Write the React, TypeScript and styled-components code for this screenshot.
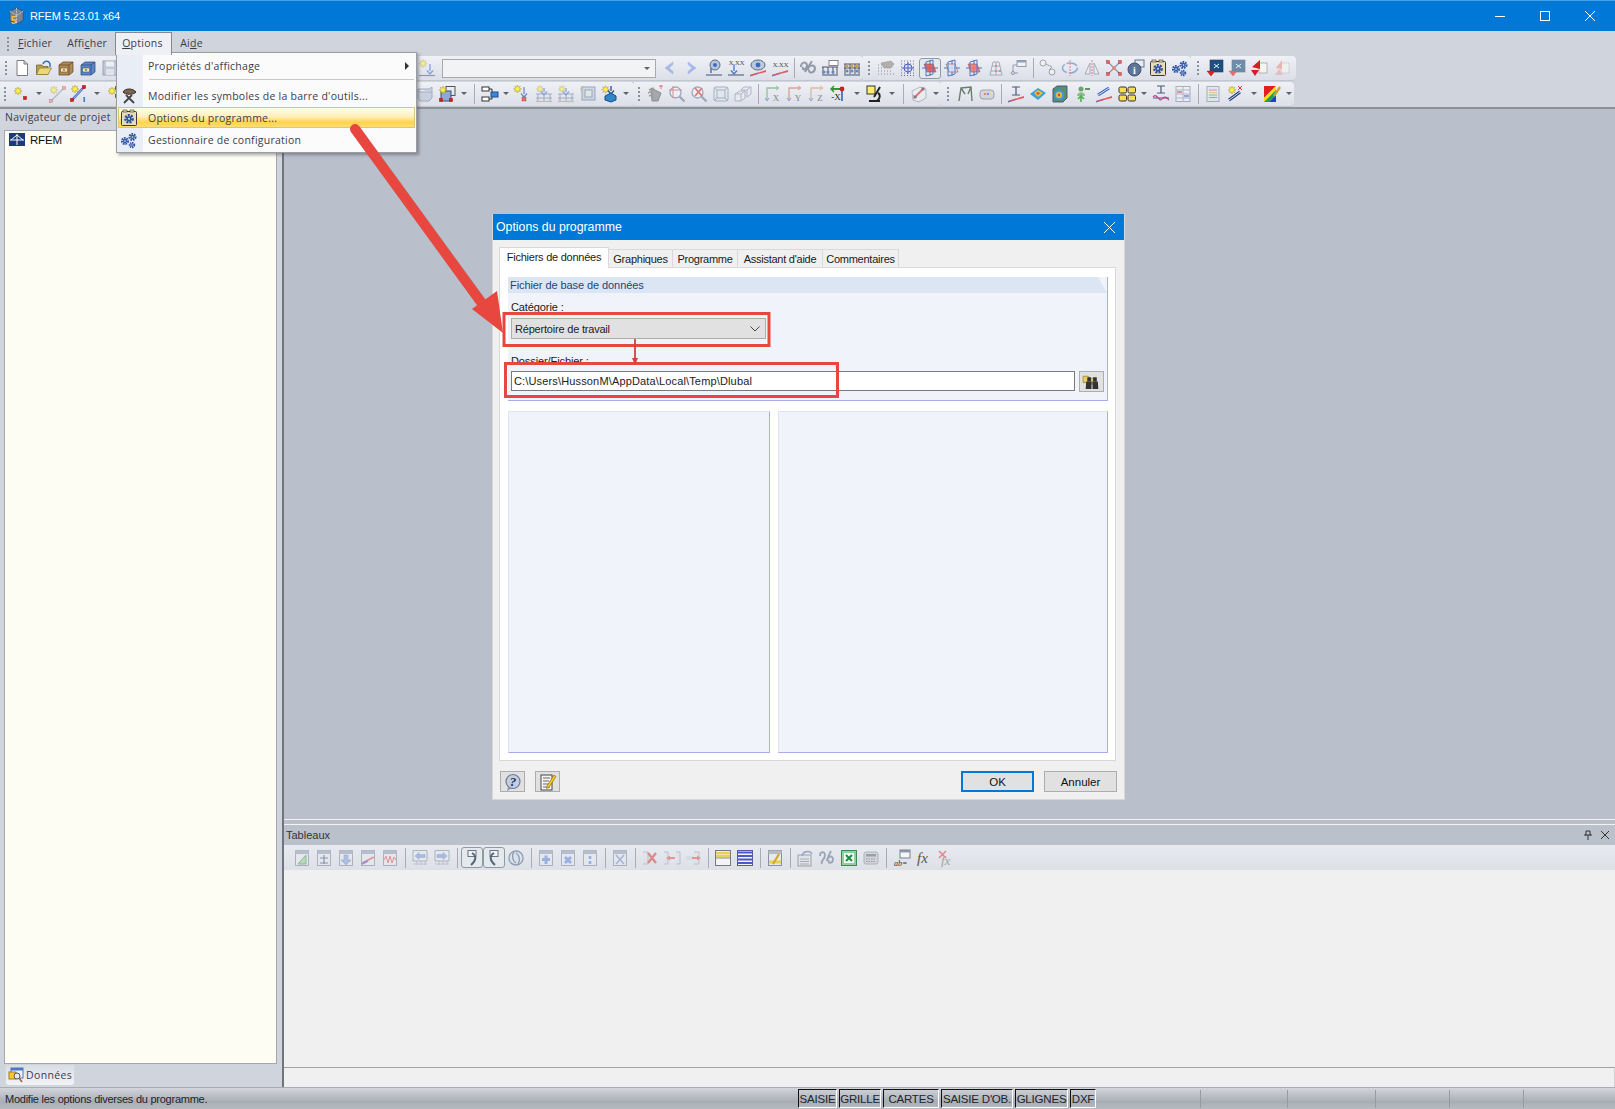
import React, { ReactNode } from "react";
import styled, { createGlobalStyle } from "styled-components";

const GlobalStyle = createGlobalStyle`
  html, body {
    margin: 0;
    padding: 0;
    overflow: hidden;
    background: #d0d4dc;
  }
  * {
    box-sizing: border-box;
  }
`;

// small drawing helpers for the toolbar glyphs
const star = (x: number, y: number, r = 4) => {
  const pts: string[] = [];
  for (let i = 0; i < 16; i++) {
    const a = (Math.PI * i) / 8;
    const d = i % 2 ? r * 0.5 : r;
    pts.push(`${(x + Math.cos(a) * d).toFixed(1)},${(y + Math.sin(a) * d).toFixed(1)}`);
  }
  return <polygon points={pts.join(" ")} fill="#fff14a" stroke="#a8982a" strokeWidth=".5" />;
};
const dot = (x: number, y: number, c = "#e01b1b", s = 3.4) => (
  <rect x={x - s / 2} y={y - s / 2} width={s} height={s} fill={c} stroke="#7a1010" strokeWidth=".3" />
);
const base = (y = 16, c = "#5a6a8a") => <line x1="1" y1={y} x2="17" y2={y} stroke={c} strokeWidth="1.2" />;
const wedge = <path d="M1 16 L17 11 L17 13 L1 17Z" fill="#e85a5a" />;
const wedgeBlue = <path d="M1 16 L9 13.5 L9 15 L1 17.5Z" fill="#4a6ae0" />;
const down = (x: number, y1: number, y2: number, c = "#4a78c8") => (
  <path d={`M${x} ${y1} V${y2 - 3} M${x - 3} ${y2 - 3.5} L${x} ${y2} L${x + 3} ${y2 - 3.5}`} fill="none" stroke={c} strokeWidth="1.3" />
);
const tbl = (inner?: ReactNode, head = "#98a3b8") => (
  <>
    <rect x="2.5" y="1.5" width="13" height="15" fill="#e6e9ee" stroke="#8a919e" />
    <rect x="2.5" y="1.5" width="13" height="3.5" fill={head} />
    {inner}
  </>
);
const grid = (c = "#8d98ae") => (
  <path d="M2 7h14M2 11h14M2 15h14M6 5v11M10 5v11M14 5v11" stroke={c} strokeWidth=".8" fill="none" />
);
const gear = (x: number, y: number, r: number, c = "#2f57a8") => (
  <>
    <circle cx={x} cy={y} r={r} fill="none" stroke={c} strokeWidth={r * 0.7} strokeDasharray={`${r * 0.55} ${r * 0.3}`} />
    <circle cx={x} cy={y} r={r * 0.72} fill={c} />
    <circle cx={x} cy={y} r={r * 0.28} fill="#dfe8f6" />
  </>
);
const fileBox = (c: string, d: string) => (
  <>
    <path d="M2 6 L6 3 H16 V13 L12 16 H2Z" fill={c} stroke={d} strokeWidth=".7" />
    <path d="M2 6 H12 V16 M12 6 L16 3" fill="none" stroke={d} strokeWidth=".7" />
    <rect x="3.5" y="9" width="7" height="4" fill="#f2e2b0" stroke={d} strokeWidth=".5" />
    <rect x="6" y="10.5" width="2" height="1" fill={d} />
  </>
);
const plane = (c: string) => (
  <>
    <path d="M9 1 V17 M1 9 H17" stroke="#4a78c8" strokeWidth="1" />
    <path d="M3 5 H12 L15 13 H6Z" fill={c} stroke="#a33" strokeWidth=".6" opacity=".85" />
    <path d="M5 3 L12 1 V15 L5 17Z" fill="none" stroke="#4a78c8" strokeWidth="1" />
  </>
);
const scene = (c1: string, c2: string) => (
  <>
    <rect x="4" y="1" width="13" height="12" fill={c1} stroke="#24405f" strokeWidth=".6" />
    <path d="M8 5 L13 9 M13 5 L8 9" stroke="#dff" strokeWidth="1" />
    <path d="M1 12 H9 L5 17Z" fill={c2} stroke="#8a1515" strokeWidth=".4" />
  </>
);
const axis = (t: string, c: string) => (
  <>
    <path d="M3 15 V3 H14" fill="none" stroke={c} strokeWidth="1.3" />
    <path d="M12 1 L15 3 L12 5" fill="none" stroke={c} strokeWidth="1" />
    <path d="M1 13 L3 16 L5 13" fill="none" stroke="#4a78c8" strokeWidth="1" />
    <text x="12" y="16" fontSize="9" fontFamily="Liberation Serif, serif" textAnchor="middle" fill="#444">{t}</text>
  </>
);
const magnify = (inner: ReactNode) => (
  <>
    <circle cx="7.5" cy="7.5" r="5.5" fill="#eef3fa" stroke="#6f7f96" strokeWidth="1.3" />
    <path d="M11.5 11.5 L16.5 16.5" stroke="#6f7f96" strokeWidth="2.2" />
    {inner}
  </>
);

const glyphs: Record<string, ReactNode> = {
  new: <path d="M4 1.5 H11 L14.5 5 V16.5 H4Z M11 1.5 V5 H14.5" fill="#fff" stroke="#6d6d6d" strokeWidth=".9" />,
  open: (
    <>
      <path d="M1.5 15.5 V6 H7 L8 7.5 H13 V15.5Z" fill="#b8a04a" stroke="#6c5c1e" strokeWidth=".7" />
      <path d="M1.5 15.5 L4.5 9 H16.5 L13 15.5Z" fill="#ecd67a" stroke="#8c7a2a" strokeWidth=".7" />
      <path d="M8 5 C9 1.5 14 1 15 5 L15 8" fill="none" stroke="#3d6fb5" strokeWidth="1.5" />
    </>
  ),
  drawerTan: fileBox("#b18a55", "#5e4424"),
  drawerBlue: fileBox("#5f86c9", "#274680"),
  save: (
    <>
      <rect x="2" y="2" width="14" height="14" fill="#a8b3c8" stroke="#6b7690" />
      <rect x="5" y="2.5" width="8" height="5" fill="#eef1f6" />
      <rect x="5" y="10" width="8" height="6" fill="#dde2ea" />
    </>
  ),
  nodeDown: (
    <>
      {star(5, 4.5)}
      {down(12, 5, 15)}
      {base(16.5)}
    </>
  ),
  prev: <path d="M12 3 L4 9 L12 15 L12 12.5 L8 9 L12 5.5Z" fill="#7d9be0" stroke="#7d9be0" strokeWidth=".6" />,
  next: <path d="M5 3 L13 9 L5 15 L5 12.5 L9 9 L5 5.5Z" fill="#7d9be0" stroke="#7d9be0" strokeWidth=".6" />,
  pin: (
    <>
      <circle cx="10" cy="6" r="5" fill="#b9c6da" stroke="#5b6d8a" />
      <circle cx="10" cy="6" r="2" fill="#3a6fc0" />
      <path d="M6 9 V14" stroke="#3a6fc0" strokeWidth="1.4" />
      {base()}
    </>
  ),
  xxDown: (
    <>
      <text x="9.5" y="5.5" fontSize="6.5" fontFamily="Liberation Serif, serif" textAnchor="middle" fill="#444">X.XX</text>
      {down(7, 6, 15)}
      {base()}
    </>
  ),
  eye: (
    <>
      <ellipse cx="9" cy="6" rx="7" ry="5" fill="#bcc8dc" stroke="#5b6d8a" />
      <circle cx="9" cy="6" r="2.4" fill="#3a6fc0" />
      {wedgeBlue}
      {wedge}
    </>
  ),
  xxWedge: (
    <>
      <text x="9.5" y="8" fontSize="6.5" fontFamily="Liberation Serif, serif" textAnchor="middle" fill="#444">X.XX</text>
      {wedgeBlue}
      {wedge}
    </>
  ),
  spring: <path d="M2 8 C2 3 7 2 8 6 C8 11 3 12 4 8 M9 11 C9 6 15 5 16 9 C16 14 10 15 10 11 M13 2 L6 13" fill="none" stroke="#5a687e" strokeWidth="2" />,
  frameA: (
    <>
      <rect x="8" y="1.5" width="9" height="5" fill="#fff" stroke="#556" strokeWidth=".7" />
      <path d="M1 8 H17 M2 8 V15 M7 8 V15 M12 8 V15 M16 8 V15" stroke="#556" fill="none" />
      <circle cx="3" cy="13" r="1.6" fill="#6787c2" /><circle cx="7" cy="13" r="1.6" fill="#6787c2" /><circle cx="12" cy="13" r="1.6" fill="#6787c2" />
      {base(16)}
    </>
  ),
  frameB: (
    <>
      <path d="M1 5 H17 M2 5 V15 M7 5 V15 M12 5 V15 M16 5 V15 M1 9 H17" stroke="#556" fill="none" />
      <circle cx="4" cy="7" r="1.5" fill="#c9a23a" /><circle cx="9" cy="7" r="1.5" fill="#c9a23a" /><circle cx="14" cy="7" r="1.5" fill="#c9a23a" />
      <circle cx="4" cy="12" r="1.5" fill="#6787c2" /><circle cx="9" cy="12" r="1.5" fill="#6787c2" /><circle cx="14" cy="12" r="1.5" fill="#6787c2" />
      {base(16)}
    </>
  ),
  gridHand: (
    <>
      <path d="M1 6h1M4 6h1M1 9h1M4 9h1M1 12h1M4 12h1M7 12h1M10 12h1M13 12h1M1 15h1M4 15h1M7 15h1M10 15h1M13 15h1M16 15h1" stroke="#555" />
      <path d="M4 4 L14 2 L17 5 L14 9 L7 9Z" fill="#8f887e" stroke="#555" strokeWidth=".5" />
    </>
  ),
  gridStar: (
    <>
      <path d="M2 2h14M2 5h14M2 8h14M2 11h14M2 14h14M2 16.5h14" stroke="#6a7080" strokeDasharray="1 2" />
      <circle cx="9" cy="9" r="4" fill="#d8dff5" stroke="#5060c8" />
      <path d="M3 9 H15 M9 3 V15" stroke="#5060c8" />
    </>
  ),
  planeRedOn: plane("#e2564b"),
  planeBlue: plane("#d8e4f4"),
  planeRed: plane("#f07a70"),
  gridRed: (
    <>
      <path d="M3 16 L6 3 H12 L15 16Z M4 12 H14 M5 7 H13 M9 3 V16" fill="#e8edf4" stroke="#7a869a" />
      <circle cx="9" cy="7" r="1" fill="#e03030" /><circle cx="9" cy="12" r="1" fill="#e03030" /><circle cx="13" cy="12" r="1" fill="#e03030" />
    </>
  ),
  path: (
    <>
      <rect x="8" y="1.5" width="9" height="6" fill="#f5f7fb" stroke="#5b6d8a" />
      <rect x="8" y="1.5" width="9" height="2" fill="#5b6d8a" />
      <path d="M8 6 H4 V14 H9" fill="none" stroke="#5b6d8a" />
      <circle cx="4" cy="14" r="1.6" fill="#c9d3e2" stroke="#5b6d8a" />
    </>
  ),
  chain: (
    <>
      <circle cx="4" cy="4" r="3" fill="#f3f4f6" stroke="#777" />
      <circle cx="13" cy="13" r="3" fill="#f3f4f6" stroke="#777" />
      <path d="M7 5 L13 8 L10 11" fill="none" stroke="#777" />
    </>
  ),
  rotate: (
    <>
      <ellipse cx="9" cy="9" rx="7.5" ry="5" fill="none" stroke="#5b85c8" strokeWidth="1.6" strokeDasharray="11 2" />
      <path d="M9 1 V17" stroke="#e04040" strokeDasharray="2 1" />
    </>
  ),
  mirror: (
    <>
      <path d="M7 4 L2 15 H7Z M11 4 L16 15 H11Z" fill="#eef1f5" stroke="#7a8494" />
      <path d="M9 1 V17" stroke="#e04040" strokeDasharray="2 1" />
    </>
  ),
  cross: (
    <>
      <path d="M3 3 L15 15 M15 3 L3 15" stroke="#8595a8" strokeWidth="1.2" />
      <circle cx="9" cy="9" r="2" fill="#e88a84" />
      {dot(3, 3, "#e8605a", 3)}{dot(15, 3, "#e8605a", 3)}{dot(3, 15, "#e8605a", 3)}{dot(15, 15, "#e8605a", 3)}
    </>
  ),
  info: (
    <>
      <rect x="8" y="1" width="9" height="7" fill="#e7ebf2" stroke="#66758c" />
      <circle cx="7.5" cy="10.5" r="6.5" fill="#5f7598" stroke="#3e506e" />
      <text x="7.5" y="14.5" fontSize="10" fontFamily="Liberation Serif, serif" fontWeight="700" textAnchor="middle" fill="#fff">i</text>
    </>
  ),
  options: (
    <>
      <rect x="1.5" y="2.5" width="15" height="14" rx="1" fill="#eadcb4" stroke="#3a3a3a" />
      <rect x="3" y="1" width="4" height="2" fill="#eadcb4" stroke="#3a3a3a" strokeWidth=".6" />
      <rect x="10" y="1" width="4" height="2" fill="#eadcb4" stroke="#3a3a3a" strokeWidth=".6" />
      {gear(9, 9.8, 3.6, "#2d4fa0")}
    </>
  ),
  gears: (
    <>
      {gear(5, 10, 3)}
      {gear(12.5, 6, 3)}
      {gear(12, 14, 2.4)}
    </>
  ),
  sceneA: scene("#1f4f80", "#e81f1f"),
  sceneB: scene("#7ea4ca", "#f08a8a"),
  coneA: (
    <>
      <rect x="9" y="4" width="8" height="10" fill="#f5f5f0" stroke="#8a8a8a" strokeWidth=".6" />
      <path d="M10 1 V10 L2 8Z" fill="#d91c1c" />
      <path d="M1 11 H9 L5 17Z" fill="#d91c1c" />
    </>
  ),
  coneB: (
    <>
      <rect x="9" y="4" width="8" height="10" fill="#f5f5f0" stroke="#aaa" strokeWidth=".6" />
      <path d="M10 1 V10 L4 9Z" fill="#ee8f8a" />
      <path d="M3 16 L7 10 L11 16Z" fill="#f0a0a0" />
    </>
  ),
  point: (
    <>
      {star(6, 6)}
      {dot(13, 13)}
    </>
  ),
  lineStar: (
    <>
      {star(6, 5)}
      <path d="M3 16 L16 3" stroke="#8a9ab8" strokeWidth="1.2" />
      {dot(3, 16, "#ee8f8a")}
      {dot(16, 3, "#ee8f8a")}
    </>
  ),
  lineI: (
    <>
      {star(5, 4)}
      <path d="M2 15 L14 2" stroke="#3d63c0" strokeWidth="2.4" />
      <path d="M2 15 L14 2" stroke="#cfe0ff" strokeWidth=".8" />
      {dot(2, 15)}{dot(14, 2)}
      <text x="14" y="17" fontSize="8" fontFamily="Liberation Sans, sans-serif" fontWeight="700" textAnchor="middle" fill="#40507a">I</text>
    </>
  ),
  starRed: (
    <>
      {star(6, 6)}
      {dot(11, 3)}
      {dot(11, 11)}
    </>
  ),
  cubeFlat: <path d="M2 4 H13 L16 2 V13 L13 16 H4 L2 13Z M2 4 L4 7 H16" fill="#b7c3d6" stroke="#78869c" />,
  starBox: (
    <>
      <rect x="8" y="1.5" width="9" height="9" fill="none" stroke="#555" />
      <rect x="3" y="6" width="10" height="10" fill="#8faad2" stroke="#34507e" />
      {star(5, 5)}
      {dot(3, 15)}{dot(13, 15)}
    </>
  ),
  flow: (
    <>
      <rect x="1" y="2" width="7" height="4" fill="#fff" stroke="#333" />
      <rect x="1" y="12" width="7" height="4" fill="#fff" stroke="#333" />
      <path d="M8 4 H11 V7 M8 14 H11 V11" fill="none" stroke="#333" />
      <rect x="10" y="7" width="7" height="5" fill="#3f86d8" stroke="#1d4f8e" />
    </>
  ),
  starDown: (
    <>
      {star(4.5, 4)}
      {down(11, 2, 12, "#6f8fc8")}
      {dot(11, 14, "#ee6f6a", 4)}
    </>
  ),
  frameStar: (
    <>
      {star(5, 4, 3.5)}
      <path d="M1 9 H17 M3 9 V16 M9 9 V16 M15 9 V16 M1 13 H17" stroke="#7585a8" fill="none" />
      {down(9, 3, 10, "#4f78c8")}
      {base(16.5, "#e88")}
    </>
  ),
  frameBox: (
    <>
      {star(4, 4, 3)}
      <rect x="3" y="2" width="13" height="13" fill="#bccadb" stroke="#6d7d95" />
      <rect x="6" y="5" width="7" height="7" fill="#d9e8d6" stroke="#6d7d95" />
    </>
  ),
  starBlue: (
    <>
      {star(4.5, 4.5)}
      {down(10, 1, 9, "#244f96")}
      <path d="M4 11 L10 8 L15 11 V15 L10 17 L4 15Z" fill="#2f87c8" stroke="#184f82" />
    </>
  ),
  hand: (
    <>
      <path d="M5 3 L15 8 L12 16 H6Z" fill="#7d7d7d" stroke="#555" />
      <path d="M3 5 L8 3 M2 8 L7 6 M3 11 L8 9" stroke="#6a6a6a" strokeWidth="1.5" />
      <path d="M13 1 H17 M15 0 V4" stroke="#d25" />
    </>
  ),
  zoomAdd: magnify(<path d="M5 1 V13 M1 5 H14" stroke="#d03030" strokeWidth=".8" />),
  zoomX: magnify(<path d="M5 3 L12 11 M12 3 L5 11" stroke="#d03030" strokeWidth="1.8" />),
  cube: (
    <>
      <rect x="2" y="2" width="14" height="14" rx="2" fill="#dfe6ef" stroke="#7a8aa0" />
      <rect x="5" y="5" width="8" height="8" fill="none" stroke="#7a8aa0" />
      <path d="M2 2 L5 5 M16 2 L13 5 M2 16 L5 13 M16 16 L13 13" stroke="#7a8aa0" />
    </>
  ),
  cubes: (
    <>
      <path d="M1 9 L6 6 H11 V13 L7 16 H1Z M1 9 H7 V16 M7 9 L11 6" fill="#e8edf3" stroke="#8795a8" />
      <path d="M7 5 L10 2 H17 V9 L13 12 V5 H7 M13 5 L17 2" fill="#e8edf3" stroke="#8795a8" />
    </>
  ),
  axisX: axis("X", "#5fa85f"),
  axisY: axis("Y", "#d86a5a"),
  axisZ: axis("Z", "#d89a6a"),
  axisNeg: (
    <>
      <path d="M1 4 H11" stroke="#2d9a2d" strokeWidth="2" />
      <path d="M4 1 L1 4 L4 7" fill="none" stroke="#2d9a2d" strokeWidth="1.5" />
      <path d="M12 4 V16" stroke="#3060c0" strokeWidth="1.6" />
      <circle cx="12" cy="4" r="2.4" fill="#c81f1f" />
      <text x="6" y="15" fontSize="9" fontFamily="Liberation Serif, serif" textAnchor="middle" fill="#222">-X</text>
    </>
  ),
  micro: (
    <>
      <rect x="1" y="1" width="8" height="8" fill="#ffee66" stroke="#333" />
      <path d="M14 2 L8 12 M3 16 H14 M11 16 C15 13 14 9 12 8" fill="none" stroke="#222" strokeWidth="2" />
    </>
  ),
  cut: (
    <>
      <path d="M2 6 L10 2 L16 4 V13 L9 17 L3 15Z" fill="#eceef2" stroke="#9199a5" />
      <path d="M5 12 L13 4" stroke="#d81f1f" strokeWidth="1.8" />
      {dot(5, 12, "#333", 2.4)}{dot(13, 4, "#333", 2.4)}
    </>
  ),
  frameLines: <path d="M3 16 L5 3 L15 2 L16 16 M5 3 L9 9 M15 2 L12 9" fill="none" stroke="#6a7f6a" strokeWidth="1.4" />,
  tag: (
    <>
      <rect x="2" y="5" width="14" height="9" rx="3" fill="#c5c9d0" stroke="#777" />
      <rect x="6" y="8" width="2" height="2" fill="#d44" /><rect x="9" y="8" width="2" height="2" fill="#44d" /><rect x="12" y="8" width="2" height="2" fill="#dd4" />
    </>
  ),
  beamI: (
    <>
      <path d="M5 2 H13 M9 2 V10 M5 10 H13" stroke="#4a5a7a" strokeWidth="1.2" fill="none" />
      {wedgeBlue}
      {wedge}
    </>
  ),
  surface: (
    <>
      <path d="M1 9 L9 3 L17 8 L9 15Z" fill="#3aa0d8" />
      <path d="M5 8 L9 5 L14 8 L9 12Z" fill="#e8c53a" />
      <path d="M7 8 L9 7 L11 8 L9 10Z" fill="#e0443a" />
    </>
  ),
  colorCube: (
    <>
      <path d="M2 4 L6 1 H16 V13 L12 17 H2Z" fill="#5a8a78" stroke="#4a5a70" />
      <circle cx="8" cy="10" r="5" fill="#3aa0d8" />
      <circle cx="8" cy="10" r="3" fill="#e8c53a" />
      <circle cx="8" cy="10" r="1.4" fill="#e0443a" />
    </>
  ),
  people: (
    <>
      <circle cx="8" cy="4" r="2.5" fill="#6ea26e" />
      <path d="M4 11 C4 6 12 6 12 11Z" fill="#8cba8c" />
      <path d="M8 11 V17 M5 14 L8 11 L11 14" stroke="#4fb04f" strokeWidth="1.6" fill="none" />
      <path d="M17 4 H12" stroke="#5a9a5a" strokeWidth="2" />
    </>
  ),
  loadLine: (
    <>
      <path d="M3 10 L14 3" stroke="#3d63c0" strokeWidth="3" />
      <path d="M3 10 L14 3" stroke="#d6e4fa" strokeWidth="1" />
      {wedgeBlue}
      {wedge}
    </>
  ),
  four: (
    <>
      {[[1, 2], [10, 2], [1, 10], [10, 10]].map(([x, y], i) => (
        <rect key={i} x={x} y={y} width="7.5" height="6" rx="1.5" fill="#f6dc5a" stroke="#333" />
      ))}
    </>
  ),
  beamWave: (
    <>
      <path d="M5 1 H13 M9 1 V8 M5 8 H13" stroke="#4a5a7a" strokeWidth="1.2" fill="none" />
      <path d="M1 13 H17" stroke="#4a5a7a" />
      <path d="M1 12 C5 7 7 18 10 14 C13 10 15 13 17 15" fill="none" stroke="#c83a8a" strokeWidth="1.2" />
    </>
  ),
  tableMix: (
    <>
      <rect x="2" y="1.5" width="14" height="15" fill="#f0f2f6" stroke="#7a879c" />
      <path d="M2 5 H16 M2 9 H16 M2 13 H16 M9 1.5 V16.5" stroke="#8896ac" />
      <rect x="3" y="6" width="5" height="2" fill="#d65a5a" />
      <rect x="10" y="10" width="5" height="2" fill="#5a7ad6" />
    </>
  ),
  doc: (
    <>
      <rect x="3" y="1.5" width="12" height="15" fill="#dfe3ea" stroke="#7a879c" />
      <path d="M5 5h8" stroke="#d65a5a" /><path d="M5 7.5h8" stroke="#d6b85a" /><path d="M5 10h8" stroke="#5aa05a" /><path d="M5 12.5h8" stroke="#5a7ad6" />
    </>
  ),
  wand: (
    <>
      {star(6, 5)}
      <path d="M3 15 L14 7" stroke="#253e78" strokeWidth="3" />
      <path d="M3 15 L14 7" stroke="#d0dcf2" strokeWidth="1" />
      <path d="M12 1 L16 5 M16 1 L12 5" stroke="#d33" />
    </>
  ),
  colorScale: (
    <>
      <path d="M1 1 H13 L1 13Z" fill="#e02020" />
      <path d="M1 13 L13 1 V5 L1 17Z" fill="#f0e020" />
      <path d="M1 17 L13 5 V10 L6 17Z" fill="#20a040" />
      <path d="M6 17 L13 10 V17Z" fill="#2040c0" />
      <path d="M11 11 L17 2" stroke="#c8a040" strokeWidth="2.4" />
    </>
  ),
  tTri: tbl(<path d="M5 15 L13 6 V15Z" fill="#9cd29c" stroke="#5a9a5a" />),
  tPlus: tbl(<path d="M9 6 V15 M5 9 H13 M5 14 H13" stroke="#4a5f8a" strokeWidth="1.2" />),
  tDown: tbl(<path d="M7 6 H11 V11 H14 L9 16 L4 11 H7Z" fill="#8fa8d8" stroke="#5a72a8" strokeWidth=".5" />),
  tLine: tbl(<><path d="M3 14 L15 8" stroke="#e85a5a" strokeWidth="1.6" /><path d="M3 15 L9 12" stroke="#4a6ae0" strokeWidth="1.6" /></>),
  tWave: tbl(<path d="M3 11 L5 7 L7 14 L9 7 L11 14 L13 8 L15 11" fill="none" stroke="#e85a5a" />),
  pageL: (
    <>
      {grid("#9aa4b8")}
      <path d="M2 1.5 H16 V12 H2Z" fill="#e6e9ee" stroke="#8a919e" />
      <path d="M4 7 L8 3.5 V5.5 H14 V8.5 H8 V10.5Z" fill="#7e9fe0" stroke="#5a72a8" strokeWidth=".4" />
    </>
  ),
  pageR: (
    <>
      {grid("#9aa4b8")}
      <path d="M2 1.5 H16 V12 H2Z" fill="#e6e9ee" stroke="#8a919e" />
      <path d="M14 7 L10 3.5 V5.5 H4 V8.5 H10 V10.5Z" fill="#7e9fe0" stroke="#5a72a8" strokeWidth=".4" />
    </>
  ),
  curveL: (
    <>
      <rect x="5" y="1.5" width="8" height="6" fill="#f0f2f5" stroke="#6a7585" />
      <path d="M9 4 C14 7 13 12 8 16" fill="none" stroke="#55647a" strokeWidth="2" />
    </>
  ),
  curveR: (
    <>
      <rect x="5" y="1.5" width="8" height="6" fill="#f0f2f5" stroke="#6a7585" />
      <path d="M9 4 C4 7 5 12 10 16" fill="none" stroke="#55647a" strokeWidth="2" />
    </>
  ),
  globe: <path d="M9 2 C4 2 2 6 2 9 C2 14 6 16 9 16 C14 16 16 12 16 9 C16 5 13 2 9 2Z M7 3 C4 7 6 12 9 14 M11 15 C14 11 12 6 9 4" fill="#d8e0ec" stroke="#56708f" strokeWidth="1.3" />,
  tAddB: tbl(<path d="M9 6.5 V15 M5 10.5 H13" stroke="#6a8edc" strokeWidth="3" />),
  tXB: tbl(<path d="M6 8 L12 14 M12 8 L6 14" stroke="#6a8edc" strokeWidth="3" />),
  tColon: tbl(<path d="M9 7 V10 M9 12 V15" stroke="#6a8edc" strokeWidth="2.6" />),
  tXG: tbl(<path d="M5 6 L13 15 M13 6 L5 15" stroke="#7e93c8" strokeWidth="1.6" />),
  rowX: (
    <>
      <path d="M2 3 H7 V15 H2" fill="#dfe2e8" stroke="#a2a9b5" />
      <path d="M7 4 L15 14 M15 4 L7 14" stroke="#d8504a" strokeWidth="2.4" />
    </>
  ),
  rowL: (
    <>
      <path d="M1 3 H5 V15 H1" fill="#dfe2e8" stroke="#a2a9b5" />
      <path d="M13 3 H17 V15 H13" fill="#dfe2e8" stroke="#a2a9b5" />
      <path d="M3 9 L7 6.5 V8 H12 V10 H7 V11.5Z" fill="#e0625c" />
    </>
  ),
  rowR: (
    <>
      <path d="M1 7 H8 V11 H1" fill="#d2d6dd" />
      <path d="M9 3 H14 V15 H9" fill="#dfe2e8" stroke="#a2a9b5" />
      <path d="M16 9 L12 6.5 V8 H7 V10 H12 V11.5Z" fill="#e0625c" />
    </>
  ),
  yellowT: (
    <>
      <rect x="1.5" y="1.5" width="15" height="15" fill="#f4f4f4" stroke="#7a7a7a" />
      <path d="M2 4 H16 M2 7 H16" stroke="#e8cf5a" strokeWidth="2.4" />
      <path d="M2 9 H16" stroke="#8a8a8a" />
    </>
  ),
  blueT: (
    <>
      <rect x="1.5" y="1.5" width="15" height="15" fill="#f4f4f4" stroke="#5a5a9a" />
      <path d="M2 3.5 H16 M2 7 H16 M2 10.5 H16 M2 14 H16" stroke="#4a5ac8" strokeWidth="2" />
    </>
  ),
  tPen: tbl(
    <>
      <path d="M3 13 H15" stroke="#e8cf5a" strokeWidth="3" />
      <path d="M7 15 L13 5" stroke="#d4a820" strokeWidth="2.2" />
    </>,
    "#b8bcc4",
  ),
  stamp: (
    <>
      <rect x="2" y="6" width="13" height="11" fill="#dfe2e8" stroke="#777" />
      <path d="M4 10h9M4 12.5h9M4 15h9" stroke="#888" />
      <path d="M6 7 C7 2 14 1 16 5" fill="none" stroke="#6a7fb0" strokeWidth="1.6" />
    </>
  ),
  springBlue: <path d="M2 7 C2 2 7 2 7 6 C7 11 2 12 4 15 M9 12 C9 7 15 6 15 10 C15 15 9 15 11 11 M13 2 L10 8" fill="none" stroke="#6a7c96" strokeWidth="1.8" />,
  excel: (
    <>
      <rect x="1.5" y="1.5" width="15" height="15" fill="#8fcf9f" stroke="#3e8a4f" />
      <rect x="4" y="4" width="10" height="10" fill="#f4fbf6" />
      <path d="M6 6 L12 12 M12 6 L6 12" stroke="#1f8a3f" strokeWidth="2" />
    </>
  ),
  calc: (
    <>
      <rect x="2" y="3" width="14" height="12" rx="2" fill="#c9ccd2" stroke="#8a8f98" />
      <rect x="4" y="5" width="10" height="2.5" fill="#6a707c" />
      <path d="M4 10h10M4 12.5h10" stroke="#666" strokeDasharray="1.5 1" />
    </>
  ),
  abEq: (
    <>
      <rect x="7" y="1" width="10" height="8" fill="#f5f6f8" stroke="#7a8090" />
      <rect x="7" y="1" width="10" height="2.4" fill="#8a94a8" />
      <text x="1" y="17" fontSize="8" fontStyle="italic" fontFamily="Liberation Serif, serif" fill="#333">ab=</text>
    </>
  ),
  fx: <text x="2" y="14" fontSize="15" fontStyle="italic" fontFamily="Liberation Serif, serif" fill="#555">fx</text>,
  fxX: (
    <>
      <text x="4" y="16" fontSize="13" fontStyle="italic" fontFamily="Liberation Serif, serif" fill="#777">fx</text>
      <path d="M2 2 L9 9 M9 2 L2 9" stroke="#d84a4a" strokeWidth="1.5" />
    </>
  ),
  wrench: (
    <>
      <path d="M3 5 C5 1 13 1 16 5 C14 8 5 8 3 5Z" fill="#7a6350" stroke="#3a2e24" />
      <path d="M4 16 L12 8 M14 16 L6 8" stroke="#444" strokeWidth="1.8" />
    </>
  ),
};

const Window = styled.div`
  position: relative;
  width: 1615px;
  height: 1109px;
  display: flex;
  flex-direction: column;
  overflow: hidden;
  background: #d0d4dc;
  font-family: "Liberation Sans", Arial, sans-serif;
  color: #222;
`;

const TitleBar = styled.div`
  flex: none;
  height: 31px;
  display: flex;
  align-items: center;
  background: #0078d7;
  border-top: 1px solid #4aa0e4;
  color: #fff;
  font-size: 11px;
  letter-spacing: -0.1px;
  padding-left: 8px;
`;

const TitleText = styled.span`
  margin-left: 5px;
`;

const WindowControls = styled.div`
  margin-left: auto;
  margin-right: 3px;
  display: flex;
`;

const WindowButton = styled.div`
  width: 45px;
  height: 30px;
  display: flex;
  align-items: center;
  justify-content: center;
`;

const MenuBar = styled.div`
  flex: none;
  height: 25px;
  display: flex;
  align-items: center;
  padding-left: 5px;
  font-family: "Open Sans", sans-serif;
  font-size: 10.5px;
  letter-spacing: 0.25px;
  color: #3c3c4c;
`;

const Grip = styled.span<{ $w?: number }>`
  flex: none;
  width: ${(p) => p.$w || 8}px;
  height: 100%;
  display: flex;
  align-items: center;
  justify-content: center;

  &::before {
    content: "";
    width: 2px;
    height: 14px;
    background: repeating-linear-gradient(#8a909c 0 2px, transparent 2px 4px);
  }
`;

const MenuEntry = styled.div<{ $open?: boolean }>`
  height: 23px;
  display: flex;
  align-items: center;
  padding: 0 7px 2px;
  margin-right: 1px;
  ${(p) =>
    p.$open &&
    `
    padding: 0 7px 2px 6px;
    width: 57px;
    background: #eef0f4;
    border: 1px solid #85888e;
    border-bottom: none;
    position: relative;
    z-index: 4;
  `}
`;

const Toolbars = styled.div`
  flex: none;
  height: 53px;
  border-bottom: 2px solid #8d9299;
  background: #d0d4dc;
`;

const ToolRow = styled.div`
  height: 25.5px;
  display: flex;
`;

const ToolGroup = styled.div`
  height: 25px;
  display: flex;
  align-items: center;
  border-radius: 0 4px 4px 0;
  background: linear-gradient(#eff1f6, #dcdfe8);
  border-bottom: 1px solid #c2c6cf;
`;

const Tool = styled.span<{ $w?: number; $faded?: boolean; $on?: boolean }>`
  flex: none;
  width: ${(p) => p.$w || 22}px;
  height: 21px;
  display: flex;
  align-items: center;
  justify-content: center;
  ${(p) =>
    p.$on &&
    `
    background: #e3e9ec;
    border: 1px solid #8f9ba3;
    border-radius: 3px;
  `}

  & svg {
    opacity: ${(p) => (p.$faded ? 0.6 : 1)};
  }
`;

const Caret = styled.span<{ $w: number }>`
  flex: none;
  width: ${(p) => p.$w}px;
  height: 21px;
  display: flex;
  align-items: center;
  justify-content: center;

  &::before {
    content: "";
    border-left: 3px solid transparent;
    border-right: 3px solid transparent;
    border-top: 3px solid #5d636e;
  }
`;

const Separator = styled.span<{ $w: number }>`
  flex: none;
  width: ${(p) => p.$w}px;
  height: 20px;
  display: flex;
  justify-content: center;

  &::before {
    content: "";
    width: 1px;
    background: #a7acb6;
  }
`;

const Spacer = styled.span<{ $w: number }>`
  flex: none;
  width: ${(p) => p.$w}px;
`;

const ToolCombo = styled.div`
  flex: none;
  width: 214px;
  height: 19px;
  margin: 0 3px 0 4px;
  display: flex;
  align-items: center;
  justify-content: flex-end;
  padding-right: 5px;
  background: #f2f3f5;
  border: 1px solid #a9a9a9;

  &::after {
    content: "";
    border-left: 3px solid transparent;
    border-right: 3px solid transparent;
    border-top: 3px solid #5d636e;
  }
`;

const Glyph = ({ kind, size = 18 }: { kind: string; size?: number }) => (
  <svg width={size} height={size} viewBox="0 0 18 18">
    {glyphs[kind]}
  </svg>
);

// tokens: name, ~faded, *pressed, #grip:w, |sep:w, ^caret:w, _gap:w, combo
const Tools = ({ list }: { list: string }) => (
  <>
    {list
      .trim()
      .split(/\s+/)
      .map((token, i) => {
        const head = token[0];
        const rest = token.slice(1);
        if (head === "#") return <Grip key={i} $w={Number(rest)} />;
        if (head === "|") return <Separator key={i} $w={Number(rest)} />;
        if (head === "^") return <Caret key={i} $w={Number(rest)} />;
        if (head === "_") return <Spacer key={i} $w={Number(rest)} />;
        if (token === "combo") return <ToolCombo key={i} />;
        if (head === "~") return <Tool key={i} $faded><Glyph kind={rest} /></Tool>;
        if (head === "*") return <Tool key={i} $on><Glyph kind={rest} /></Tool>;
        return <Tool key={i}><Glyph kind={token} /></Tool>;
      })}
  </>
);

const Body = styled.div`
  flex: 1;
  min-height: 0;
  display: flex;
`;

const LeftColumn = styled.div`
  flex: none;
  width: 282px;
  display: flex;
  flex-direction: column;
`;

const PaneLabel = styled.div`
  height: 15px;
  margin-bottom: 6px;
  padding-left: 5px;
  display: flex;
  align-items: center;
  font-family: "Open Sans", sans-serif;
  font-size: 10.5px;
  letter-spacing: 0.25px;
  color: #3c3c4c;
`;

const NavTree = styled.div`
  flex: 1;
  margin-left: 4px;
  width: 273px;
  padding: 2px 0 0 4px;
  background: #fdfdf4;
  border: 1px solid #a4a7ad;
`;

const TreeRow = styled.div`
  display: flex;
  align-items: center;
  gap: 5px;
  font-size: 11.5px;
  letter-spacing: -0.2px;
  color: #111;
`;

const TabStrip = styled.div`
  flex: none;
  height: 23px;
  padding: 1px 0 0 6px;
`;

const DataTab = styled.div`
  width: 68px;
  height: 20px;
  display: flex;
  align-items: center;
  gap: 2px;
  padding-left: 2px;
  background: linear-gradient(#d9dde4, #f2f4f7);
  border-radius: 0 0 3px 3px;
  font-family: "Open Sans", sans-serif;
  font-size: 10.5px;
  letter-spacing: 0.35px;
  color: #3c3c4c;
`;

const RightColumn = styled.div`
  flex: 1;
  min-width: 0;
  display: flex;
  flex-direction: column;
  border-left: 2px solid #70757d;
`;

const Desktop = styled.div`
  flex: none;
  height: 710px;
  background: #b9c0cb;
`;

const SplitBar = styled.div`
  flex: none;
  height: 6px;
  background: #b9c0cb;
  border-top: 1px solid #f2f3f5;
  border-bottom: 1px solid #f2f3f5;
`;

const TablesHeader = styled.div`
  flex: none;
  height: 20px;
  display: flex;
  align-items: center;
  padding: 0 6px 0 2px;
  background: #bbc1cb;
  font-size: 11px;
  color: #333;
`;

const PaneIcons = styled.div`
  margin-left: auto;
  display: flex;
  gap: 9px;
  align-items: center;
`;

const TablesBar = styled.div`
  flex: none;
  height: 25px;
  display: flex;
  align-items: center;
  padding-left: 7px;
  background: linear-gradient(#e7eaf0, #dde0e7);
`;

const TablesContent = styled.div`
  flex: 1;
  background: #f0f0f0;
`;

const TablesFooter = styled.div`
  flex: none;
  height: 20px;
  background: #f0f0f0;
  border-top: 1px solid #a0a0a0;
  border-right: 1px solid #d0d0d0;
`;

const StatusBar = styled.div`
  flex: none;
  height: 22px;
  display: flex;
  align-items: center;
  position: relative;
  padding-left: 5px;
  background: linear-gradient(#d2d5da, #a9aeb6 65%, #b6b9c0);
  border-top: 1px solid #a9adb4;
  font-size: 11px;
  color: #20242c;
`;

const StatusText = styled.span`
  width: 793px;
  letter-spacing: -0.25px;
`;

const StatusButtons = styled.div`
  display: flex;
  gap: 2px;
  height: 19px;
`;

const StatusButton = styled.div<{ $w: number }>`
  width: ${(p) => p.$w}px;
  display: flex;
  align-items: center;
  justify-content: center;
  border-top: 1px solid #111;
  border-left: 1px solid #111;
  border-right: 1px solid #fff;
  border-bottom: 1px solid #fff;
  white-space: nowrap;
  font-size: 11.5px;
  letter-spacing: -0.2px;
`;

const StatusCell = styled.div<{ $w: number }>`
  flex: none;
  width: ${(p) => p.$w}px;
  height: 18px;
  border-right: 1px solid #979ca4;
`;

const MenuPopup = styled.div`
  position: absolute;
  left: 116px;
  top: 52px;
  width: 301px;
  height: 101px;
  padding: 2px 1px;
  background: linear-gradient(90deg, #e9edf5 26px, #fbfbfb 26px);
  border: 1px solid #9b9da2;
  box-shadow: 2px 2px 3px rgba(60, 60, 70, 0.45);
  font-family: "Open Sans", sans-serif;
  font-size: 10.5px;
  letter-spacing: 0.25px;
  color: #3c3c4c;
  z-index: 3;
`;

const PopupItem = styled.div<{ $hot?: boolean }>`
  position: relative;
  height: 21px;
  display: flex;
  align-items: center;
  padding-left: 29px;
  margin-bottom: 1px;
  border: 1px solid transparent;
  ${(p) =>
    p.$hot &&
    `
    background: linear-gradient(#fffdf0, #ffefb8 45%, #ffd34f 75%, #ffdd72);
    border-color: #dcc676;
  `}
`;

const PopupIcon = styled.span`
  position: absolute;
  left: 1px;
  top: 1px;
  display: flex;
`;

const SubArrow = styled.span`
  position: absolute;
  right: 5px;
  border-left: 4px solid #333;
  border-top: 4px solid transparent;
  border-bottom: 4px solid transparent;
`;

const PopupRule = styled.div`
  height: 1px;
  margin: 3px 1px 5px 31px;
  background: #c9c9c9;
`;

const Dialog = styled.div`
  position: absolute;
  left: 492px;
  top: 214px;
  width: 633px;
  height: 586px;
  display: flex;
  flex-direction: column;
  background: #f0f0f0;
  border: 1px solid #d5d7db;
  border-top: none;
  z-index: 2;
`;

const DialogTitle = styled.div`
  flex: none;
  height: 26px;
  display: flex;
  align-items: center;
  justify-content: space-between;
  padding: 0 9px 0 3px;
  background: #0078d7;
  color: #fff;
  font-size: 12.3px;
`;

const TabRow = styled.div`
  flex: none;
  display: flex;
  align-items: flex-end;
  height: 20px;
  margin: 7px 0 0 6px;
`;

const DialogTab = styled.div<{ $w: number; $active?: boolean }>`
  width: ${(p) => p.$w}px;
  height: ${(p) => (p.$active ? 21 : 18)}px;
  padding-bottom: ${(p) => (p.$active ? 3 : 0)}px;
  display: flex;
  align-items: center;
  justify-content: center;
  font-size: 11px;
  letter-spacing: -0.25px;
  color: #1a1a1a;
  border: 1px solid #d9d9d9;
  border-bottom: none;
  border-left: ${(p) => (p.$active ? "1px solid #d9d9d9" : "none")};
  background: ${(p) => (p.$active ? "#fff" : "#f0f0f0")};
  position: relative;
  z-index: ${(p) => (p.$active ? 1 : 0)};
  margin-bottom: ${(p) => (p.$active ? -1 : 0)}px;
`;

const TabPage = styled.div`
  flex: none;
  width: 617px;
  height: 494px;
  margin-left: 6px;
  padding: 9px 7px 0 8px;
  background: #fff;
  border: 1px solid #d9d9d9;
`;

const Group = styled.div`
  height: 124px;
  display: flex;
  flex-direction: column;
  background: #f0f3f9;
  border-right: 1px solid #a9afe6;
  border-bottom: 1px solid #a9afe6;
`;

const GroupTitle = styled.div`
  flex: none;
  height: 16px;
  display: flex;
  align-items: center;
  padding-left: 2px;
  background: #dce5f3;
  clip-path: polygon(0 0, calc(100% - 9px) 0, 100% 100%, 0 100%);
  font-size: 11px;
  letter-spacing: -0.08px;
  color: #1f4678;
`;

const GroupBody = styled.div`
  flex: 1;
  padding: 7px 3px 0;
`;

const FieldLabel = styled.div`
  height: 14px;
  display: flex;
  align-items: center;
  font-size: 11px;
  letter-spacing: -0.1px;
  color: #1a1a1a;
`;

const Combo = styled.div`
  width: 255px;
  height: 21px;
  margin: 4px 0 15px;
  padding: 0 5px 0 3px;
  display: flex;
  align-items: center;
  justify-content: space-between;
  background: #e1e1e1;
  border: 1px solid #adadad;
  font-size: 11px;
  letter-spacing: -0.2px;
`;

const PathRow = styled.div`
  display: flex;
  align-items: flex-start;
  margin-top: 3px;
`;

const PathInput = styled.div`
  width: 564px;
  height: 20px;
  padding-left: 2px;
  display: flex;
  align-items: center;
  background: #fff;
  border: 1px solid #7a7a7a;
  font-size: 11px;
  letter-spacing: 0.15px;
`;

const IconButton = styled.div<{ $left?: number }>`
  width: 25px;
  height: 21px;
  margin-left: ${(p) => p.$left || 0}px;
  display: flex;
  align-items: center;
  justify-content: center;
  background: #e1e1e1;
  border: 1px solid #adadad;
`;

const PanelRow = styled.div`
  display: flex;
  justify-content: space-between;
  margin-top: 10px;
`;

const Panel = styled.div<{ $w: number }>`
  width: ${(p) => p.$w}px;
  height: 342px;
  background: #f0f3f9;
  border: 1px solid #dfe4ee;
  border-right-color: #a9afe6;
  border-bottom-color: #a9afe6;
`;

const DialogFooter = styled.div`
  flex: 1;
  display: flex;
  align-items: flex-start;
  padding: 10px 7px 0 7px;
`;

const PushButton = styled.div<{ $default?: boolean }>`
  width: 73px;
  height: 21px;
  display: flex;
  align-items: center;
  justify-content: center;
  background: #e1e1e1;
  border: ${(p) => (p.$default ? "2px solid #0078d7" : "1px solid #adadad")};
  font-size: 11.5px;
  color: #111;
  margin-left: ${(p) => (p.$default ? "auto" : "10px")};
`;

const Annotations = styled.svg`
  position: absolute;
  left: 0;
  top: 0;
  pointer-events: none;
  z-index: 5;
`;

const Underlined = styled.u`
  text-underline-offset: 1px;
`;

const RED = "#e8473f";

const App = () => {
  return (
    <Window>
      <GlobalStyle />
      <TitleBar>
        <svg width="17" height="19" viewBox="0 0 18 20">
          <path d="M9 1 L16 4.5 V14 L9 18 L2 14 V4.5Z" fill="#7b8490" stroke="#3a4048" strokeWidth=".6" />
          <path d="M9 1 V9 M2 4.5 L9 9 L16 4.5 M9 9 V18" stroke="#c4cbd4" strokeWidth="1" strokeDasharray="2 1" fill="none" />
          <text x="3" y="18" fontSize="11" fontWeight="700" fontFamily="Liberation Sans, sans-serif" fill="#f2c230">5</text>
        </svg>
        <TitleText>RFEM 5.23.01 x64</TitleText>
        <WindowControls>
          <WindowButton>
            <svg width="10" height="10" viewBox="0 0 10 10"><path d="M0 5.5 H10" stroke="#fff" /></svg>
          </WindowButton>
          <WindowButton>
            <svg width="10" height="10" viewBox="0 0 10 10"><rect x=".5" y=".5" width="9" height="9" fill="none" stroke="#fff" /></svg>
          </WindowButton>
          <WindowButton>
            <svg width="10" height="10" viewBox="0 0 10 10"><path d="M0 0 L10 10 M10 0 L0 10" stroke="#fff" /></svg>
          </WindowButton>
        </WindowControls>
      </TitleBar>

      <MenuBar>
        <Grip $w={6} />
        <MenuEntry><Underlined>F</Underlined>ichier</MenuEntry>
        <MenuEntry>Affi<Underlined>c</Underlined>her</MenuEntry>
        <MenuEntry $open><Underlined>O</Underlined>ptions</MenuEntry>
        <MenuEntry>Ai<Underlined>d</Underlined>e</MenuEntry>
      </MenuBar>

      <Toolbars>
        <ToolRow>
          <ToolGroup>
            <Tools list="#11 new open drawerTan drawerBlue ~save _295 ~nodeDown combo ~prev ~next pin xxDown eye xxWedge |6 ~spring frameA frameB" />
          </ToolGroup>
          <ToolGroup>
            <Tools list="#12 ~gridHand gridStar *planeRedOn planeBlue planeRed ~gridRed ~path |8 ~chain ~rotate ~mirror cross info options gears" />
          </ToolGroup>
          <ToolGroup>
            <Tools list="#13 sceneA ~sceneA coneA ~coneB _4" />
          </ToolGroup>
        </ToolRow>
        <ToolRow>
          <ToolGroup>
            <Tools list="#10 point ^14 ~lineStar lineI ^14 starRed _288 ~cubeFlat starBox ^12 |9 flow ^10 starDown ~frameStar ~frameStar ~frameBox starBlue ^10 _3" />
          </ToolGroup>
          <ToolGroup>
            <Tools list="#10 ~hand ~zoomAdd ~zoomX ~cube ~cubes |8 ~axisX ~axisY ~axisZ axisNeg ^14 micro ^12 |10 ~cut ^11" />
          </ToolGroup>
          <ToolGroup>
            <Tools list="#13 frameLines ~tag |7 beamI surface colorCube people loadLine _1 four ^12 beamWave ~tableMix |8 ~doc wand ^15 colorScale ^11" />
          </ToolGroup>
        </ToolRow>
      </Toolbars>

      <Body>
        <LeftColumn>
          <PaneLabel>Navigateur de projet</PaneLabel>
          <NavTree>
            <TreeRow>
              <svg width="16" height="13" viewBox="0 0 16 13">
                <rect width="16" height="13" fill="#1e3a7a" />
                <path d="M1 7 H15 M8 1 V12" stroke="#fff" />
                <path d="M2 7 L8 2 L14 7" fill="none" stroke="#fff" />
              </svg>
              RFEM
            </TreeRow>
          </NavTree>
          <TabStrip>
            <DataTab>
              <svg width="16" height="16" viewBox="0 0 16 16">
                <rect x="3" y="1" width="12" height="10" fill="#eef3fb" stroke="#4a78c8" />
                <rect x="3" y="1" width="12" height="2.5" fill="#4a78c8" />
                <rect x="1" y="5" width="7" height="7" fill="#f6c83a" stroke="#a47c12" />
                <circle cx="9" cy="9" r="3" fill="#dfe8f6" stroke="#555" />
                <path d="M11 11 L14 15" stroke="#a5642a" strokeWidth="1.6" />
              </svg>
              Données
            </DataTab>
          </TabStrip>
        </LeftColumn>

        <RightColumn>
          <Desktop />
          <SplitBar />
          <TablesHeader>
            Tableaux
            <PaneIcons>
              <svg width="8" height="10" viewBox="0 0 8 10"><path d="M2 1 H6 V5 H7.5 H.5 H2Z M4 5 V10" fill="none" stroke="#333" /></svg>
              <svg width="8" height="8" viewBox="0 0 8 8"><path d="M0 0 L8 8 M8 0 L0 8" stroke="#333" /></svg>
            </PaneIcons>
          </TablesHeader>
          <TablesBar>
            <Tools list="~tTri ~tPlus ~tDown ~tLine ~tWave |8 ~pageL ~pageR |8 *curveL *curveR ~globe |8 ~tAddB ~tXB ~tColon |8 ~tXG |8 ~rowX ~rowL ~rowR |7 yellowT blueT |8 tPen |8 ~stamp ~springBlue excel ~calc |9 abEq fx ~fxX" />
          </TablesBar>
          <TablesContent />
          <TablesFooter />
        </RightColumn>
      </Body>

      <StatusBar>
        <StatusText>Modifie les options diverses du programme.</StatusText>
        <StatusButtons>
          <StatusButton $w={39}>SAISIE</StatusButton>
          <StatusButton $w={42}>GRILLE</StatusButton>
          <StatusButton $w={56}>CARTES</StatusButton>
          <StatusButton $w={72}>SAISIE D'OB.</StatusButton>
          <StatusButton $w={53}>GLIGNES</StatusButton>
          <StatusButton $w={26}>DXF</StatusButton>
        </StatusButtons>
        <StatusCell $w={105} />
        <StatusCell $w={87} />
        <StatusCell $w={88} />
        <StatusCell $w={74} />
        <StatusCell $w={74} />
      </StatusBar>

      <MenuPopup>
        <PopupItem>
          Propriétés d'affichage
          <SubArrow />
        </PopupItem>
        <PopupRule />
        <PopupItem>
          <PopupIcon><Glyph kind="wrench" /></PopupIcon>
          Modifier les symboles de la barre d'outils...
        </PopupItem>
        <PopupItem $hot>
          <PopupIcon><Glyph kind="options" /></PopupIcon>
          Options du programme...
        </PopupItem>
        <PopupItem>
          <PopupIcon><Glyph kind="gears" /></PopupIcon>
          Gestionnaire de configuration
        </PopupItem>
      </MenuPopup>

      <Dialog>
        <DialogTitle>
          Options du programme
          <svg width="11" height="11" viewBox="0 0 11 11"><path d="M0 0 L11 11 M11 0 L0 11" stroke="#fff" /></svg>
        </DialogTitle>
        <TabRow>
          <DialogTab $w={110} $active>Fichiers de données</DialogTab>
          <DialogTab $w={64}>Graphiques</DialogTab>
          <DialogTab $w={65}>Programme</DialogTab>
          <DialogTab $w={85}>Assistant d'aide</DialogTab>
          <DialogTab $w={76}>Commentaires</DialogTab>
        </TabRow>
        <TabPage>
          <Group>
            <GroupTitle>Fichier de base de données</GroupTitle>
            <GroupBody>
              <FieldLabel>Catégorie :</FieldLabel>
              <Combo>
                Répertoire de travail
                <svg width="10" height="6" viewBox="0 0 10 6"><path d="M.5 .5 L5 5 L9.5 .5" fill="none" stroke="#444" /></svg>
              </Combo>
              <FieldLabel>Dossier/Fichier :</FieldLabel>
              <PathRow>
                <PathInput>C:\Users\HussonM\AppData\Local\Temp\Dlubal</PathInput>
                <IconButton $left={4}>
                  <svg width="19" height="17" viewBox="0 0 18 16">
                    <path d="M1 3 H6 L7 5 H13 V9 H1Z" fill="#e8cf62" stroke="#8a7424" strokeWidth=".6" />
                    <rect x="5" y="4" width="3.5" height="4" fill="#333" />
                    <rect x="10.5" y="4" width="3.5" height="4" fill="#333" />
                    <path d="M4 8 H9 V15 H3.5Z M10 8 H15 L15.5 15 H10Z" fill="#333" />
                    <rect x="8.5" y="8" width="2" height="3" fill="#666" />
                  </svg>
                </IconButton>
              </PathRow>
            </GroupBody>
          </Group>
          <PanelRow>
            <Panel $w={262} />
            <Panel $w={330} />
          </PanelRow>
        </TabPage>
        <DialogFooter>
          <IconButton>
            <svg width="18" height="18" viewBox="0 0 18 18">
              <circle cx="9" cy="8.5" r="7" fill="#c6cddc" stroke="#6a7aa0" strokeWidth="1.2" />
              <path d="M4 14 L3 18 L8 15Z" fill="#8a96b4" />
              <text x="9" y="13" fontSize="13" fontWeight="700" fontStyle="italic" fontFamily="Liberation Serif, serif" textAnchor="middle" fill="#1f2f6a">?</text>
            </svg>
          </IconButton>
          <IconButton $left={10}>
            <svg width="18" height="18" viewBox="0 0 18 18">
              <rect x="2" y="2" width="11" height="15" fill="#f6f6f6" stroke="#444" />
              <path d="M4 5h7M4 8h6M4 11h6M4 14h7" stroke="#666" />
              <path d="M8 13 L15 2 L17 3.5 L10 14.5 L7.5 15.5Z" fill="#f2c91e" stroke="#7a5c10" strokeWidth=".6" />
            </svg>
          </IconButton>
          <PushButton $default>OK</PushButton>
          <PushButton>Annuler</PushButton>
        </DialogFooter>
      </Dialog>

      <Annotations width="1615" height="1109" viewBox="0 0 1615 1109">
        <rect x="504" y="313.5" width="265" height="32" fill="none" stroke={RED} strokeWidth="3" />
        <rect x="505.5" y="363.5" width="332" height="33" fill="none" stroke={RED} strokeWidth="3" />
        <path d="M635 339 V362" stroke="#c9453f" strokeWidth="1.8" />
        <path d="M632 358 L635 365 L638 358Z" fill="#c9453f" />
        <path d="M355 129 L486 309" stroke="rgba(70,70,70,.25)" strokeWidth="10" strokeLinecap="round" transform="translate(1.5 1.5)" />
        <path d="M355 129 L486 309" stroke={RED} strokeWidth="10" strokeLinecap="round" />
        <path d="M503 333 L472 309 L497 291Z" fill={RED} />
      </Annotations>
    </Window>
  );
};

export default App;
